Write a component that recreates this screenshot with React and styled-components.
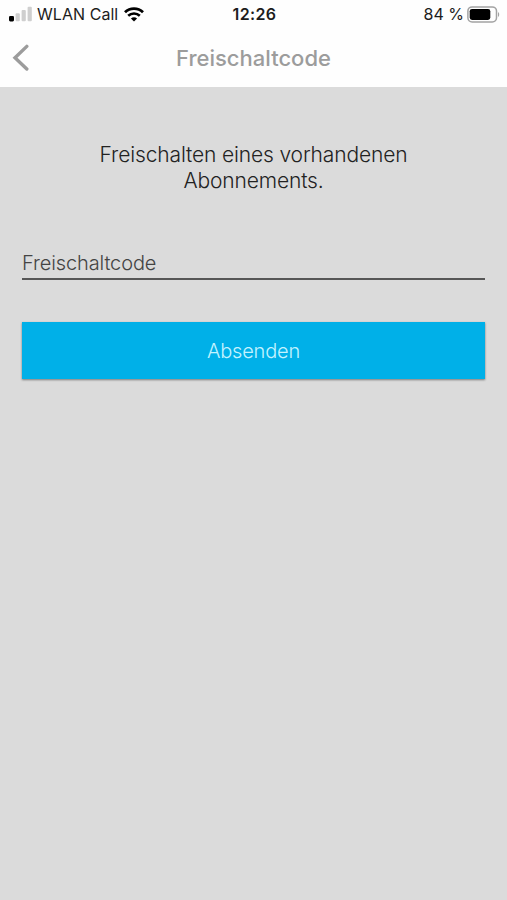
import React from 'react';
import styled, { createGlobalStyle } from 'styled-components';

const GlobalStyle = createGlobalStyle`
  * {
    box-sizing: border-box;
  }

  body {
    margin: 0;
    background: #dbdbdb;
    font-family: Inter, 'Liberation Sans', sans-serif;
  }
`;

const Screen = styled.div`
  display: flex;
  flex-direction: column;
  height: 900px;
  overflow: hidden;
  background: #dbdbdb;
`;

const Header = styled.header`
  height: 87px;
  background: #fefefe;
`;

const StatusBar = styled.div`
  display: grid;
  grid-template-columns: 1fr auto 1fr;
  align-items: center;
  height: 28px;
  padding: 0 7px 0 9px;
  color: #1c1c1c;
`;

const StatusGroup = styled.div`
  display: flex;
  align-items: center;
  justify-content: ${(props) => (props.$end ? 'flex-end' : 'flex-start')};

  svg {
    flex: none;
  }
`;

const StatusText = styled.span`
  font-size: 16px;
  line-height: 20px;
  font-weight: ${(props) => (props.$bold ? 600 : 400)};
  letter-spacing: ${(props) => props.$spacing || '0'};
  margin: ${(props) => props.$margin || '0'};
  white-space: nowrap;
`;

const NavBar = styled.div`
  display: grid;
  grid-template-columns: 48px 1fr 48px;
  align-items: center;
  height: 59px;
`;

const BackButton = styled.button`
  display: flex;
  align-items: center;
  height: 59px;
  padding: 0 0 1px 12px;
  border: 0;
  background: none;
`;

const Title = styled.h1`
  margin: 0;
  color: #9c9c9c;
  font-size: 22px;
  line-height: 28px;
  font-weight: 450;
  letter-spacing: 0;
  text-align: center;
`;

const Form = styled.form`
  display: flex;
  flex-direction: column;
  padding: 55px 22px 0;
`;

const Intro = styled.p`
  width: 340px;
  margin: 0 auto 56px;
  color: #222;
  font-size: 21px;
  line-height: 26px;
  font-weight: 300;
  letter-spacing: -0.14px;
  text-align: center;
`;

const CodeInput = styled.input`
  width: 100%;
  height: 30px;
  padding: 0 0 2px;
  margin-bottom: 42px;
  border: 0;
  border-bottom: 2px solid #565656;
  border-radius: 0;
  outline: 0;
  background: transparent;
  color: #444;
  font: 300 20px/24px Inter, 'Liberation Sans', sans-serif;
  letter-spacing: -0.12px;

  &::placeholder {
    color: #444;
    opacity: 1;
  }
`;

const SubmitButton = styled.button`
  height: 57px;
  padding: 0;
  border: 0;
  background: #00b0e8;
  box-shadow: 0 1px 2px rgba(0, 0, 0, 0.45);
  color: #c4f3ff;
  font: 300 20px/24px Inter, 'Liberation Sans', sans-serif;
  letter-spacing: -0.2px;
`;

const SignalIcon = () => (
  <svg width="24" height="16" viewBox="0 0 24 16">
    <rect x="0" y="10" width="5" height="5.4" rx="1.3" fill="#000" />
    <rect x="6.6" y="7.3" width="4.2" height="8" rx="1" fill="#cfcfcf" />
    <rect x="12.6" y="4" width="4.2" height="11.3" rx="1" fill="#cfcfcf" />
    <rect x="18.6" y="0.8" width="4.2" height="14.5" rx="1" fill="#cfcfcf" />
  </svg>
);

const WifiIcon = () => (
  <svg width="20" height="15" viewBox="0 0 20 15" fill="none" stroke="#000">
    <path d="M1 5.2a13 13 0 0 1 18 0" strokeWidth="2.8" />
    <path d="M4.2 8.8a8.4 8.4 0 0 1 11.6 0" strokeWidth="2.6" />
    <path d="M10 14.6 6.9 11.6a4.6 4.6 0 0 1 6.2 0z" fill="#000" stroke="none" />
  </svg>
);

const BatteryIcon = () => (
  <svg width="33" height="17" viewBox="0 0 33 17">
    <rect x="0.9" y="0.9" width="28.6" height="15" rx="4.2" fill="#fefefe" stroke="#a3a3a3" strokeWidth="1.5" />
    <rect x="2.7" y="2.9" width="20.6" height="11" rx="2.3" fill="#000" />
    <path d="M31 6c1.6.7 1.6 4.3 0 5z" fill="#a3a3a3" />
  </svg>
);

const BackIcon = () => (
  <svg width="18" height="27" viewBox="0 0 18 27" fill="none">
    <path d="M14.8 2.4 3 13.8 14.8 25" stroke="#9c9c9c" strokeWidth="3.4" strokeLinecap="round" />
  </svg>
);

const App = () => (
  <>
    <GlobalStyle />
    <Screen>
      <Header>
        <StatusBar>
          <StatusGroup>
            <SignalIcon />
            <StatusText $margin="0 6px 0 4px" $spacing="0.05px">WLAN Call</StatusText>
            <WifiIcon />
          </StatusGroup>
          <StatusText $bold $spacing="0.4px">12:26</StatusText>
          <StatusGroup $end>
            <StatusText $margin="0 3px 0 0">84 %</StatusText>
            <BatteryIcon />
          </StatusGroup>
        </StatusBar>
        <NavBar>
          <BackButton type="button" aria-label="Zurück">
            <BackIcon />
          </BackButton>
          <Title>Freischaltcode</Title>
        </NavBar>
      </Header>
      <Form>
        <Intro>Freischalten eines vorhandenen Abonnements.</Intro>
        <CodeInput placeholder="Freischaltcode" />
        <SubmitButton type="button">Absenden</SubmitButton>
      </Form>
    </Screen>
  </>
);

export default App;
